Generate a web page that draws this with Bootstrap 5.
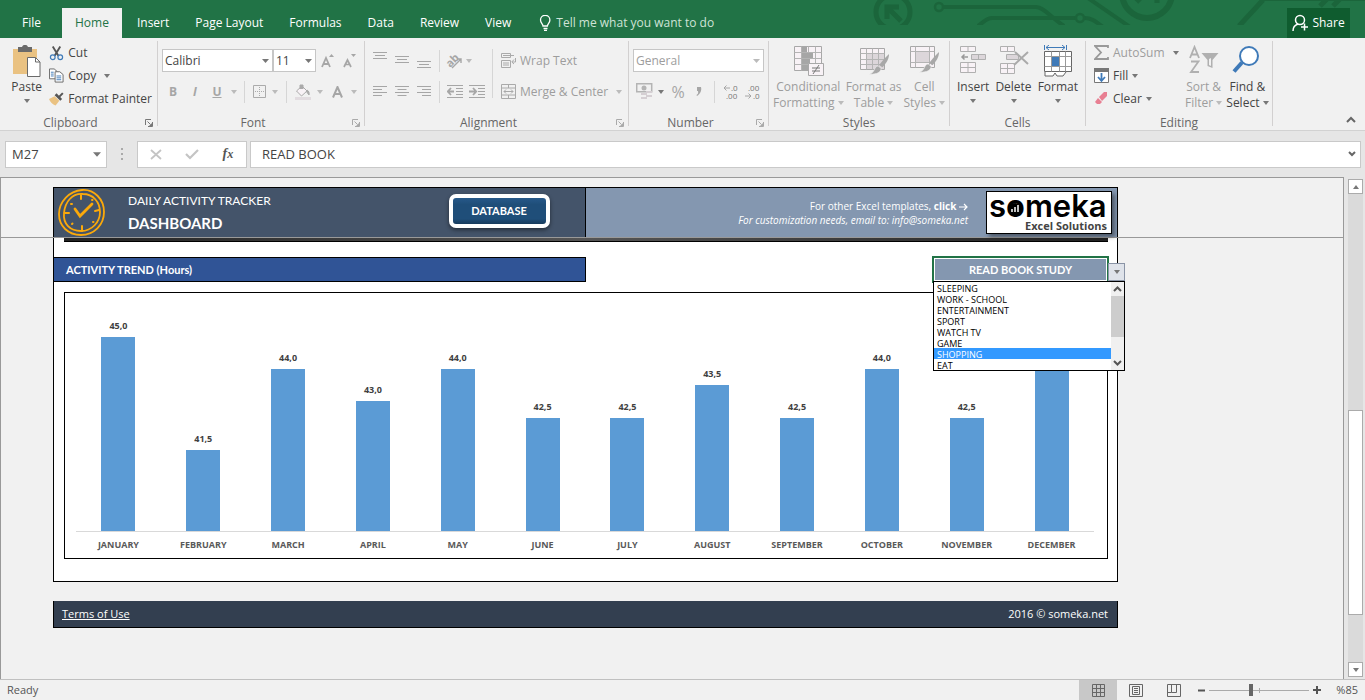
<!DOCTYPE html>
<html lang="en">
<head>
<meta charset="utf-8">
<meta name="viewport" content="width=device-width, initial-scale=1">
<title>Daily Activity Tracker - Excel</title>
<link href="https://cdn.jsdelivr.net/npm/bootstrap@5.3.0/dist/css/bootstrap.min.css" rel="stylesheet">
<style>
:root{--ui:"Open Sans","Noto Sans",sans-serif;--cell:Lato,"Open Sans",sans-serif;--green:#217346;--line:#d2d0d0}
body{font-family:var(--ui);font-size:12px;line-height:16px;color:#444;background:#f1f1f1;min-height:100vh;overflow:hidden}
svg{display:block;flex:none}
button,select,input{font:inherit;color:inherit}
/* title bar */
.topbar{background:var(--green);height:38px;position:relative;padding:0 15px 0 9px}
.topbar .art{position:absolute;right:0;top:0}
.tab{color:#fff;border:0;border-radius:0;padding:0 13px;height:30px;line-height:30px;font-size:12px;background:none}
.tab.active{background:#f1f1f1;color:var(--green);margin-right:2px}
.tell{color:#cfe3d7;padding-left:15px}
.share{background:#0f5c2f;color:#fff;width:63px;height:30px;border:0;position:relative}
/* ribbon */
.ribbon{background:#f1f1f1;height:93px;border-bottom:1px solid #d2d2d2}
.rgroup{position:relative;border-right:1px solid var(--line);margin:3px 0 5px;height:85px;flex:none}
.rgroup .body{height:73px}
.rgroup .rows{padding-top:8px}
.rgroup .title{height:12px;line-height:18px;color:#666;text-align:center}
.g-clip{width:158px}.g-font{width:207px}.g-align{width:264px}.g-num{width:140px}.g-style{width:181px}.g-cells{width:136px}.g-edit{width:187px}
.editcol{width:87px}
.launch{position:absolute;right:4px;bottom:-1px;color:#777}
.launch.off{color:#aaa}
.tb{border:0;background:none;padding:0;height:23px;display:flex;align-items:center;justify-content:center;white-space:nowrap;flex:none}
.w16{width:16px}.w20{width:20px}.w22{width:22px}
.tc{width:12px}
.off{color:#9d9d9d}
.glyph{color:#a6a6a6;font-weight:700}
.big{border:0;background:none;padding:4px 0 0;display:flex;flex-direction:column;align-items:center;white-space:nowrap;flex:none}
.big svg.ic{height:34px}
.caret{display:inline-block;border:3px solid transparent;border-top:4px solid #777;border-bottom:0;vertical-align:2px;flex:none}
.caret.up{transform:rotate(180deg)}
.off .caret,.caret.off{border-top-color:#bbb}
.off .caret.dark{border-top-color:#777}
.vsep{width:1px;background:#d6d6d6;height:22px;flex:none;margin:0 5px}
.rsel{border:1px solid #c6c6c6;border-radius:0;height:23px;flex:none;padding:0 14px 0 2px;font-size:12px;line-height:16px;color:#444;background-color:#fff;background-position:right 3px center;background-size:7px 4px;
 background-image:url("data:image/svg+xml,%3Csvg xmlns='http://www.w3.org/2000/svg' viewBox='0 0 7 4'%3E%3Cpath d='M0 0h7L3.5 4z' fill='%23777'/%3E%3C/svg%3E")}
.rsel:disabled{color:#9d9d9d;background-color:#fff;opacity:1;
 background-image:url("data:image/svg+xml,%3Csvg xmlns='http://www.w3.org/2000/svg' viewBox='0 0 7 4'%3E%3Cpath d='M0 0h7L3.5 4z' fill='%23bbb'/%3E%3C/svg%3E")}
.wfont{width:111px}.wsize{width:43px}.wnum{width:131px}
/* formula bar */
.fbar{background:#e6e6e6;height:46px;padding:0 4px 0 5px}
.fbar .fld{height:27px;border:1px solid #c9c9c9;border-radius:0;background-color:#fff;font-size:13px;color:#444}
.namebox{width:102px;padding:0 14px 0 6px;background-size:8px 5px;background-position:right 5px center}
.grip{margin:0 14px}
.fbtns{width:110px;margin-right:3px}
.fx{font-family:"Liberation Serif",serif;font-style:italic;font-weight:700;font-size:14px;color:#555}
.finput{border:0;outline:0;background:none;padding:0 0 0 11px}
/* sheet */
.work{background:#e6e6e6}
.sheet{border:1px solid #999;border-bottom:0;background:#f1f1f1}
.vscroll{width:21px;background:#e6e6e6;padding:2px 2px 2px 4px}
.track{background:#dadada}
.sbtn{width:15px;height:15px;border:1px solid #ababab;background:#fff;padding:0}
.thumb{width:15px;height:205px;border:1px solid #ababab;background:#fff;margin-bottom:47px}
.frozen{border-bottom:1px solid #999;height:60px;padding-top:9px}
.area{margin-left:52px;margin-right:225px}
.banner{border:1px solid #000;border-bottom:0;height:50px;background:#8497b0}
.banner .half{background:#44546a;border-right:1px solid #000;width:50%;padding-right:35px;color:#fff;font-family:var(--cell)}
.dash1{font-size:12px;line-height:20px}.dash2{font-size:15px;line-height:24px;font-weight:700}
.heads{margin-left:22px}
.dbbtn{background:linear-gradient(#27598a,#1f4e79 25%,#1f4e79 80%,#173b5c);border:4px solid #fff;border-radius:7px;width:101px;height:34px;color:#fff;font-weight:700;font-size:11px;padding:0;box-shadow:0 2px 4px #0007;font-family:var(--cell)}
.note{color:#fff;font-size:10px;line-height:14px;text-align:right;white-space:nowrap;margin-right:18px}
.note svg{display:inline-block;vertical-align:-1px}
.logo{position:relative;background:#fff;border:1px solid #000;width:126px;height:43px;box-shadow:3px 3px 4px #0006;margin-right:5px}
.panel{background:#fff;border:1px solid #000;border-top:0;padding:0 9px 22px 10px}
.strip{height:4px;background:linear-gradient(90deg,#222,#555 50%,#222);border-bottom:1px solid #000}
.trendrow{margin:15px -1px 0 -10px}
.trend{background:#305496;border:1px solid #000;border-left:0;height:25px;color:#fff;font:700 11px/23px var(--cell);width:calc(50% + 4px);padding-left:12px}
.picked{border:2px solid var(--green);width:177px;height:27px;padding:1px;position:relative;margin-top:-1px}
.picked .val{background:#8497b0;color:#fff;font:700 11px/21px var(--cell);text-align:center;height:21px}
.ddbtn{position:absolute;left:174px;top:5px;width:17px;height:18px;border:1px solid #8a94a6;background:#dfe3ea;padding:0;display:flex;align-items:center;justify-content:center}
.ddlist{position:absolute;z-index:3;left:-1px;top:23px;width:192px;height:90px;border:1px solid #000;background:#fff}
.ddlist select{border:0;padding:0;margin:0;outline:0;overflow:hidden;width:177px;height:88px;background:#fff;color:#000;font-size:9px;appearance:none;scrollbar-width:none}
.ddlist option{height:11px;min-height:0;line-height:9px;padding:0 0 2px 3px;font-size:9px}
.ddlist option.hot{background:#3399ff;color:#fff}
.ddlist .bar2{width:13px;background:#f0f0f0}
.ddlist .th{height:41px;background:#cdcdcd}
.chart{border:1px solid #000;height:267px;margin-top:9px;padding:0 13px 0 11px}
.plot{height:239px;border-bottom:1px solid #d9d9d9}
.colm{flex:1 1 0;display:flex;flex-direction:column;align-items:center;justify-content:flex-end}
.colm b{font-size:9px;line-height:12px;color:#404040;margin-bottom:5px}
.colm i{display:block;width:34px;background:#5b9bd5}
.months span{flex:1 1 0;text-align:center;font-weight:700;font-size:9px;line-height:12px;color:#595959;padding-top:7px}
.foot{background:#333f50;border:1px solid #000;border-top:0;height:27px;margin-top:19px;color:#fff;font-size:11px;padding:0 9px 0 8px}
.foot a{color:#fff}
/* status bar */
.status{background:#f1f1f1;border-top:1px solid #c0c0c0;height:21px;padding:0 7px;color:#555;font-size:11px}
.vbtn{width:38px;height:20px;border:0;background:none;display:flex;align-items:center;justify-content:center;padding:0}
.vbtn.on{background:#c8c8c8}
.zoomval{width:33px}
.zoomer{appearance:none;width:100px;height:14px;background:linear-gradient(#aaa,#aaa) 0 7px/100% 1px no-repeat,linear-gradient(#aaa,#aaa) 50px 5px/1px 5px no-repeat;margin:0}
.zoomer::-webkit-slider-thumb{appearance:none;width:4px;height:12px;background:#666}
</style>
</head>
<body class="d-flex flex-column">
<svg width="0" height="0" class="position-absolute" aria-hidden="true">
 <defs>
  <symbol id="launch" viewBox="0 0 8 8"><path d="M.5 6V.5H6M2.500 2.500l3 3M7.500 3v4.500H3" fill="none" stroke="currentColor"/><path d="M7 4v3H4z" fill="currentColor"/></symbol>
  <symbol id="brush" viewBox="0 0 20 20"><path d="M20 0c0 5-3 9-6 12l-3-2c3-4 6-7 9-10z" fill="#a8a8a8"/><path d="M10.500 11l2.500 2.500c-1 3-3 5-11 5 3-1 4-2.500 5-5 1-2 2-2.500 3.500-2.500z" fill="#a8a8a8" stroke="#f1f1f1" stroke-width=".6"/></symbol>
 </defs>
</svg>

<header class="topbar d-flex align-items-end">
 <svg class="art" width="495" height="38" viewBox="870 0 495 38" fill="none" stroke="#1b653b">
  <clipPath id="c1"><rect x="870" y="0" width="495" height="25"/></clipPath>
  <g clip-path="url(#c1)"><circle cx="893" cy="12" r="17" stroke-width="5"/><path d="M887 19V7h12M888 8l13 13" stroke-width="5"/>
  <circle cx="939" cy="7" r="4" stroke-width="2.500"/><path d="M944 7h92c8 0 14 10 28 19M978 26c6-4 8-8 14-8h83M1085 18c7 0 11 4 18 9M1088-2l42 29" stroke-width="4"/><circle cx="1080" cy="18" r="4" stroke-width="2.500"/>
  <circle cx="1147" cy="-7" r="25" stroke-width="6"/><path d="M1134-4l6 6M1157-2v5M1239 26l24-26M1320 6l8-8M1333 6l8-8" stroke-width="5"/><path d="M1262 0h103" stroke-width="2"/></g>
 </svg>
 <nav class="d-flex position-relative" aria-label="Ribbon tabs">
  <button class="tab me-2">File</button><button class="tab active">Home</button><button class="tab">Insert</button><button class="tab">Page Layout</button><button class="tab">Formulas</button><button class="tab">Data</button><button class="tab">Review</button><button class="tab">View</button>
  <button class="tab tell d-flex align-items-center gap-1"><svg width="13" height="16" viewBox="0 0 13 16" fill="none" stroke="#fff" stroke-width="1.300"><path d="M4 11c0-2-2.500-3-2.500-6a4.700 4.700 0 0 1 9.400 0c0 3-2.500 4-2.500 6zM4.500 13.500h4M5 15.300h3"/></svg>Tell me what you want to do</button>
 </nav>
 <button class="share ms-auto d-flex align-items-center justify-content-center gap-1 p-0"><svg width="16" height="18" viewBox="0 0 16 18" fill="none" stroke="#fff" stroke-width="1.500"><circle cx="8" cy="6" r="4.500"/><path d="M1 17c0-4 2-6 5-7M9 13h7M12.500 9.500v7"/></svg>Share</button>
</header>

<section class="ribbon d-flex position-relative" aria-label="Ribbon">
 <div class="rgroup g-clip">
  <div class="body d-flex ps-2">
   <button class="big w-25"><svg class="ic" width="30" height="34" viewBox="0 0 30 34"><path d="M1 4h24v25H1z" fill="#eac282"/><path d="M6 2h4c1-3 5-3 6 0h4v5H6z" fill="#6a6a6a"/><path d="M15.500 12.500h8l4.500 4.500v14.500H15.500z" fill="#fff" stroke="#6a6a6a"/><path d="M23.500 12.500V17h4.500" fill="none" stroke="#6a6a6a"/></svg><span>Paste</span><span class="caret mt-1"></span></button>
   <div class="ps-1">
    <button class="tb gap-1"><svg width="15" height="16" viewBox="0 0 16 16" fill="none"><path d="M4 1l6 10M12 1L6 11" stroke="#555" stroke-width="2"/><circle cx="4" cy="12.500" r="2.500" stroke="#3f7ab8" stroke-width="1.300"/><circle cx="12" cy="12.500" r="2.500" stroke="#3f7ab8" stroke-width="1.300"/></svg>Cut</button>
    <button class="tb gap-1"><svg width="15" height="15" viewBox="0 0 16 15" fill="#fff" stroke="#666"><path d="M.5.500h5L8.500 3v8H.5z"/><path d="M6.500 3.500h5l3.500 3v8H6.500z"/><path d="M2 4h3M2 6h3M2 8h3M8 8h5M8 10h5M8 12h5" stroke="#3f7ab8"/></svg>Copy<span class="caret ms-1"></span></button>
    <button class="tb gap-1"><svg width="15" height="15" viewBox="0 0 16 15"><path d="M0 8l6-3 5 5-4 5c-3-1-6-4-7-7z" fill="#eac282"/><path d="M6 4l2-2 6 6-2 2z" fill="#555"/><path d="M10 5l4-4 1.500 1.500-4 4z" fill="#555"/></svg>Format Painter</button>
   </div>
  </div>
  <div class="title pe-3">Clipboard</div><svg class="launch" width="8" height="8"><use href="#launch"/></svg>
 </div>

 <div class="rgroup g-font">
  <div class="body rows px-1 d-flex flex-column gap-2">
   <div class="d-flex align-items-center"><select class="form-select rsel wfont" aria-label="Font"><option>Calibri</option></select><select class="form-select rsel wsize" aria-label="Font size"><option>11</option></select>
    <button class="tb w22 glyph" aria-label="Increase font size"><svg width="13" height="15" viewBox="0 0 13 15"><path d="M1 14L5 5l4 9M2.500 11h5" fill="none" stroke="#a6a6a6" stroke-width="1.800"/><path d="M8 4l2.500-3L13 4z" fill="#a6a6a6"/></svg></button>
    <button class="tb w22 glyph" aria-label="Decrease font size"><svg width="13" height="15" viewBox="0 0 13 15"><path d="M1 14l3.500-7L8 14M2.500 11.500h4" fill="none" stroke="#a6a6a6" stroke-width="1.700"/><path d="M8 1l2.500 3L13 1z" fill="#a6a6a6"/></svg></button></div>
   <div class="d-flex align-items-center glyph"><button class="tb w22">B</button><button class="tb w22 fst-italic">I</button><button class="tb w22 text-decoration-underline">U</button><button class="tb tc" aria-label="Underline options"><span class="caret off"></span></button><span class="vsep mx-1"></span>
    <button class="tb w20" aria-label="Borders"><svg width="13" height="13" viewBox="0 0 13 13" fill="none" stroke="#ababab"><path d="M.5.500h12v12H.5z"/><path d="M6.500 2v10M2 6.500h10" stroke-dasharray="1 1"/></svg></button><button class="tb tc" aria-label="Border options"><span class="caret off"></span></button><span class="vsep"></span>
    <button class="tb w22" aria-label="Fill color"><svg width="16" height="16" viewBox="0 0 16 16"><path d="M1.500 7L7 2l5 5-5.500 5z" fill="#f8f2f6" stroke="#aaa"/><path d="M5 5V1h3v4M12 6c2 1 2.500 3 2 5l-3-4z" fill="#aaa" stroke="#aaa"/><path d="M0 13h16v3H0z" fill="#e2dce0"/></svg></button><button class="tb tc" aria-label="Fill options"><span class="caret off"></span></button>
    <button class="tb w22" aria-label="Font color"><svg width="11" height="12" viewBox="0 0 11 12"><path d="M1 11.500L5.500 1 10 11.500M3 8h5" fill="none" stroke="#a6a6a6" stroke-width="2"/></svg></button><button class="tb tc" aria-label="Font color options"><span class="caret off"></span></button></div>
  </div>
  <div class="title pe-3">Font</div><svg class="launch off" width="8" height="8"><use href="#launch"/></svg>
 </div>

 <div class="rgroup g-align">
  <div class="body rows ps-1 d-flex">
   <div class="d-flex flex-column gap-2">
    <div class="d-flex align-items-center">
     <button class="tb w22" aria-label="Top align"><svg width="14" height="17" viewBox="0 0 14 17" stroke="#a6a6a6"><path d="M0 .5h14M2 3.500h10M0 6.500h14"/></svg></button><button class="tb w22" aria-label="Middle align"><svg width="14" height="13" viewBox="0 0 14 13" stroke="#a6a6a6"><path d="M0 2.500h14M2 5.500h10M0 8.500h14"/></svg></button><button class="tb w22" aria-label="Bottom align"><svg width="14" height="15" viewBox="0 0 14 15" stroke="#a6a6a6"><path d="M0 8.500h14M2 11.500h10M0 14.500h14"/></svg></button><span class="vsep mx-1"></span>
     <button class="tb w22" aria-label="Orientation"><svg width="22" height="22" viewBox="0 0 22 22"><text x="2" y="14" transform="rotate(-45 9 11)" font-size="11" font-weight="700" fill="#a6a6a6">ab</text><path d="M8 18l9-9M13 9h4v4" stroke="#a6a6a6" stroke-width="1.400" fill="none"/></svg></button><button class="tb" aria-label="Orientation options"><span class="caret off"></span></button>
    </div>
    <div class="d-flex align-items-center">
     <button class="tb w22" aria-label="Align left"><svg width="14" height="11" viewBox="0 0 14 11" stroke="#a6a6a6"><path d="M0 .5h14M0 3.500h9M0 6.500h14M0 9.500h9"/></svg></button><button class="tb w22" aria-label="Center"><svg width="14" height="11" viewBox="0 0 14 11" stroke="#a6a6a6"><path d="M0 .5h14M2.500 3.500h9M0 6.500h14M2.500 9.500h9"/></svg></button><button class="tb w22" aria-label="Align right"><svg width="14" height="11" viewBox="0 0 14 11" stroke="#a6a6a6"><path d="M0 .5h14M5 3.500h9M0 6.500h14M5 9.500h9"/></svg></button><span class="vsep mx-1"></span>
     <button class="tb w22" aria-label="Decrease indent"><svg width="16" height="13" viewBox="0 0 16 13" stroke="#a6a6a6"><path d="M0 .5h16M9 3.500h7M9 6.500h7M9 9.500h7M0 12.500h16"/><path d="M7 6.500H1M4 3L.8 6.500 4 10" stroke-width="1.800" fill="none"/></svg></button><button class="tb w22" aria-label="Increase indent"><svg width="16" height="13" viewBox="0 0 16 13" stroke="#a6a6a6"><path d="M0 .5h16M9 3.500h7M9 6.500h7M9 9.500h7M0 12.500h16"/><path d="M0 6.500h6M4 3l3.200 3.500L4 10" stroke-width="1.800" fill="none"/></svg></button>
    </div>
   </div>
   <span class="vsep h-75 ms-1 me-2"></span>
   <div class="d-flex flex-column gap-2 off">
    <button class="tb gap-1 justify-content-start"><svg width="15" height="16" viewBox="0 0 15 16" fill="none" stroke="#aaa"><path d="M.5.500h9v4h-9zM.5 7.500h9v7h-9zM2 10h6M2 12h6M2 2.500h11M14.500 5v4H11M13 6.500L10.800 9l2.200 2"/></svg>Wrap Text</button>
    <button class="tb gap-1"><svg width="15" height="15" viewBox="0 0 15 15" fill="none" stroke="#aaa"><path d="M.5.500h14v14H.5zM.5 4h14M.5 11h14M7.500.500V4M7.500 11v3.500M3 7.500h9M5 5.500l-2 2 2 2M10 5.500l2 2-2 2"/></svg>Merge &amp; Center<span class="caret ms-1"></span></button>
   </div>
  </div>
  <div class="title pe-3">Alignment</div><svg class="launch off" width="8" height="8"><use href="#launch"/></svg>
 </div>

 <div class="rgroup g-num">
  <div class="body rows px-1 d-flex flex-column gap-2">
   <select class="form-select rsel wnum" disabled aria-label="Number format"><option>General</option></select>
   <div class="d-flex align-items-center glyph"><button class="tb w22" aria-label="Accounting format"><svg width="17" height="17" viewBox="0 0 17 17"><path d="M.7.700h15v8H.7z" fill="none" stroke="#b4b4b4" stroke-width="1.500"/><circle cx="8" cy="5" r="2.500" fill="#b4b4b4"/><path d="M10 8h6v2h-6zM5 10h6v2H5zM10 12h6v2h-6zM5 14h6v2H5z" fill="#d5cfd3"/></svg></button><button class="tb tc" aria-label="Currencies"><span class="caret"></span></button>
    <button class="tb w22 fs-6 fw-normal">%</button><button class="tb w20" aria-label="Comma style"><svg width="6" height="9" viewBox="0 0 6 9"><path d="M1 0h4c1 4-1 7-4 9l-.5-1C2 7 2.500 6 2 4H1z" fill="#a6a6a6"/></svg></button><span class="vsep"></span>
    <button class="tb w22" aria-label="Increase decimal"><svg width="18" height="22" viewBox="0 0 18 22"><text x="9" y="10" font-size="8" font-weight="400" fill="#777">.0</text><text x="4" y="18" font-size="8" font-weight="400" fill="#777">.00</text><path d="M8 7H2M4.500 4.500L2 7l2.500 2.500" fill="none" stroke="#a6a6a6"/></svg></button><button class="tb w22" aria-label="Decrease decimal"><svg width="18" height="22" viewBox="0 0 18 22"><text x="4" y="10" font-size="8" font-weight="400" fill="#777">.00</text><text x="9" y="18" font-size="8" font-weight="400" fill="#777">.0</text><path d="M1 15h6M4.500 12.500L7 15l-2.500 2.500" fill="none" stroke="#a6a6a6"/></svg></button></div>
  </div>
  <div class="title pe-3">Number</div><svg class="launch off" width="8" height="8"><use href="#launch"/></svg>
 </div>

 <div class="rgroup g-style">
  <div class="body d-flex justify-content-between px-1 off">
   <button class="big"><svg class="ic" width="32" height="34" viewBox="0 0 32 34"><path d="M2.500 1.500h27v24h-27z" fill="#f8f2f6" stroke="#a8a8a8"/><path d="M2.500 7.500h27M2.500 13.500h27M2.500 19.500h27M9.500 1.500v24M16.500 1.500v24M23.500 1.500v24" stroke="#b4b4b4"/><path d="M10 2h5v5h-5zM10 8h11v5H10zM10 14h8v5h-8zM10 20h6v5h-6z" fill="#a6a6a6"/><path d="M16.500 18.500h15v12h-15z" fill="#f8f2f6" stroke="#a8a8a8"/><path d="M20 23h8M20 26h8M27 20l-6 9" stroke="#777"/></svg><span>Conditional</span><span>Formatting <span class="caret"></span></span></button>
   <button class="big"><svg class="ic" width="32" height="34" viewBox="0 0 32 34"><path d="M2.500 3.500h24v21h-24z" fill="#f8f2f6" stroke="#a8a8a8"/><path d="M9 9h17v15H9z" fill="#dcd6da"/><path d="M2.500 8.500h24M2.500 14.500h24M2.500 19.500h24M8.500 3.500v21M14.500 3.500v21M20.500 3.500v21" stroke="#b4b4b4"/><use href="#brush" x="9" y="9" width="22" height="22"/></svg><span>Format as</span><span>Table <span class="caret"></span></span></button>
   <button class="big"><svg class="ic" width="32" height="34" viewBox="0 0 32 34"><path d="M2.500 1.500h24v21h-24z" fill="#f8f2f6" stroke="#a8a8a8"/><path d="M2.500 6.500h24M2.500 17.500h24M7.500 1.500v21M21.500 1.500v21" stroke="#b4b4b4"/><path d="M8 7h13v10H8z" fill="#dcd6da"/><use href="#brush" x="9" y="7" width="22" height="22"/></svg><span>Cell</span><span>Styles <span class="caret"></span></span></button>
  </div>
  <div class="title">Styles</div>
 </div>

 <div class="rgroup g-cells">
  <div class="body d-flex justify-content-between px-1">
   <button class="big flex-fill"><svg class="ic" width="28" height="34" viewBox="0 0 28 34" fill="#f8f2f6" stroke="#b0b0b0"><path d="M1.500 1.500h15v5h-15zM9 1.500v5M1.500 17.500h15v10h-15zM9 17.500v10M1.500 22.500h15"/><path d="M12.500 9.500h14v5h-14zM19.500 9.500v5" fill="#dcd6da"/><path d="M9 12H3M5.500 9.500L3 12l2.500 2.500" stroke="#999" stroke-width="1.500" fill="none"/></svg><span>Insert</span><span class="caret mt-1"></span></button>
   <button class="big flex-fill"><svg class="ic" width="30" height="34" viewBox="0 0 30 34" fill="#f8f2f6" stroke="#b0b0b0"><path d="M1.500 1.500h14v5h-14zM8.500 1.500v5M1.500 18.500h14v10h-14zM8.500 18.500v10M1.500 23.500h14"/><path d="M7.500 9.500h12v5h-12z" fill="#dcd6da"/><path d="M16 7l13 12M29 7L15 20" stroke="#aaa" stroke-width="2"/></svg><span>Delete</span><span class="caret mt-1"></span></button>
   <button class="big flex-fill"><svg class="ic" width="30" height="34" viewBox="0 0 30 34"><path d="M1.500 0v5M23.500 0v5M3 2.500h19M6 0L3 2.500 6 5M19 0l3 2.500L19 5" stroke="#3f7ab8" fill="none"/><path d="M1.500 6.500h27v20h-27z" fill="#fff" stroke="#666"/><path d="M1.500 11.500h27M1.500 21.500h27M8.500 6.500v20M16.500 6.500v20M22.500 6.500v20" stroke="#999"/><path d="M9 12h7v9H9z" fill="#3f7ab8"/><path d="M2 27v4h8l2-3 2 3h6l3-4" fill="#fff" stroke="#666"/></svg><span>Format</span><span class="caret mt-1"></span></button>
  </div>
  <div class="title">Cells</div>
 </div>

 <div class="rgroup g-edit">
  <div class="body d-flex ps-2">
   <div class="editcol">
    <button class="tb gap-1 off"><svg width="15" height="15" viewBox="0 0 15 15"><path d="M14 3V1H1l6 6.500L1 14h13v-2" fill="none" stroke="#999" stroke-width="1.800"/></svg>AutoSum<span class="caret dark ms-1"></span></button>
    <button class="tb gap-1"><svg width="15" height="15" viewBox="0 0 15 15"><path d="M.5.500h14v14H.5z" fill="#fff" stroke="#777"/><path d="M0 0h15v4H0z" fill="#777"/><path d="M7.500 5v8M4 9l3.500 4L11 9" fill="none" stroke="#3f7ab8" stroke-width="1.800"/></svg>Fill<span class="caret"></span></button>
    <button class="tb gap-1"><svg width="15" height="15" viewBox="0 0 15 15"><path d="M5 6l5-5h3v4L8 10z" fill="#e87f92"/><path d="M4 7l4 4-2 2H3L1 11z" fill="#e87f92"/></svg>Clear<span class="caret"></span></button>
   </div>
   <button class="big off px-1"><svg class="ic" width="30" height="34" viewBox="0 0 30 34" fill="none" stroke="#b0b0b0" stroke-width="1.800"><path d="M1 13L5.500 2 10 13M2.500 9.500h6M2 16.500h7.500L2 27h8"/><path d="M12.500 8h17l-6 7v8l-5-2v-6z" fill="#b0b0b0" stroke="none"/><path d="M20 14v6l2 1v-8z" fill="#f1f1f1" stroke="none"/></svg><span>Sort &amp;</span><span>Filter <span class="caret"></span></span></button>
   <button class="big"><svg class="ic" width="30" height="34" viewBox="0 0 30 34"><circle cx="17" cy="11" r="9" fill="#fff" stroke="#3f7ab8" stroke-width="2"/><path d="M10 17.500l-8 9" stroke="#3f7ab8" stroke-width="4"/></svg><span>Find &amp;</span><span>Select <span class="caret"></span></span></button>
  </div>
  <div class="title">Editing</div>
 </div>
 <button class="tb w20 ms-auto align-self-end me-1" aria-label="Collapse ribbon"><svg width="10" height="3" viewBox="0 4 10 3" overflow="visible"><path d="M1 9l4-4 4 4" fill="none" stroke="#666" stroke-width="2"/></svg></button>
</section>

<section class="fbar d-flex align-items-center" aria-label="Formula bar">
 <select class="form-select rsel fld namebox" aria-label="Name box"><option>M27</option></select>
 <svg class="grip" width="2" height="12" viewBox="0 0 2 12" fill="#aaa"><path d="M0 0h2v2H0zM0 5h2v2H0zM0 10h2v2H0z"/></svg>
 <div class="fld fbtns d-flex align-items-center justify-content-around">
  <button class="tb w22" aria-label="Cancel"><svg width="12" height="11" viewBox="0 0 12 11"><path d="M1 1l10 9M11 1L1 10" stroke="#c4c4c4" stroke-width="1.800"/></svg></button>
  <button class="tb w22" aria-label="Enter"><svg width="14" height="11" viewBox="0 0 14 11"><path d="M1 5l4 4 8-8" fill="none" stroke="#c4c4c4" stroke-width="2.200"/></svg></button>
  <button class="tb w22 fx">f<small>x</small></button>
 </div>
 <div class="fld flex-fill d-flex align-items-center"><input class="finput flex-fill" value="READ BOOK" aria-label="Formula"><svg class="me-1" width="8" height="6" viewBox="0 0 8 6"><path d="M1 1l3 3 3-3" fill="none" stroke="#666" stroke-width="2"/></svg></div>
</section>

<main class="work d-flex flex-fill">
 <div class="sheet flex-fill">
  <div class="frozen"><div class="area banner d-flex">
   <div class="half d-flex align-items-center">
    <svg class="ms-1" width="48" height="48" viewBox="0 0 48 48" fill="none" stroke="#fba90a" stroke-width="1.800" stroke-linecap="round"><path d="M24 1C36 0 46 10 46 23S36 46 23 46 1 37 1 25 11 2 24 1z"/><path d="M25 5c10 0 17 8 17 18S34 42 23 42 5 35 6 24 14 4 25 5z"/><path d="M17 20l5 7 12-12" stroke-width="2.800"/><path d="M23 6v4M24 37v5M7 24h4M37 22l4-1M13 15l1 0M34 11l.5 0M14 35l.5-.5M35 33l.5 0" stroke-width="2"/></svg>
    <div class="heads"><div class="dash1">DAILY ACTIVITY TRACKER</div><div class="dash2">DASHBOARD</div></div>
    <button class="dbbtn ms-auto mb-1">DATABASE</button>
   </div>
   <div class="flex-fill d-flex align-items-center justify-content-end">
    <div class="note">For other Excel templates, <b>click</b> <svg width="9" height="8" viewBox="0 0 9 8" fill="none" stroke="#fff" stroke-width="1.200" role="img" aria-label="right arrow"><path d="M0 4h8M5 1l3 3-3 3"/></svg><br><i>For customization needs, email to: info@someka.net</i></div>
    <div class="logo"><svg width="124" height="41" viewBox="0 0 124 41"><text x="2" y="25" font-family="Inter" font-weight="600" font-size="31" fill="#000">someka</text><circle cx="28" cy="17" r="6" fill="#000"/><path d="M25 20v-3M28 20v-5M31 20v-7" stroke="#fff" stroke-width="1.500"/><text x="38" y="38" font-family="Open Sans" font-weight="700" font-size="11" fill="#444">Excel Solutions</text></svg></div>
   </div>
  </div></div>
  <div class="area">
   <section class="panel">
    <div class="strip"></div>
    <div class="trendrow d-flex justify-content-between">
     <div class="trend">ACTIVITY TREND (Hours)</div>
     <div class="picked"><div class="val">READ BOOK STUDY</div><button class="ddbtn" aria-label="Open list"><span class="caret"></span></button>
      <div class="ddlist d-flex"><select size="8" aria-label="Activity"><option>SLEEPING</option><option>WORK - SCHOOL</option><option>ENTERTAINMENT</option><option>SPORT</option><option>WATCH TV</option><option>GAME</option><option class="hot">SHOPPING</option><option>EAT</option></select>
       <div class="bar2 d-flex flex-column align-items-center"><svg width="9" height="14" viewBox="0 0 9 14"><path d="M1 9l3.500-3.500L8 9" fill="none" stroke="#555" stroke-width="2"/></svg><div class="th w-100"></div><svg class="mt-auto" width="9" height="14" viewBox="0 0 9 14"><path d="M1 5l3.500 3.500L8 5" fill="none" stroke="#555" stroke-width="2"/></svg></div></div>
     </div>
    </div>
    <div class="chart"><div class="plot d-flex" id="plot"></div><div class="months d-flex" id="months"></div></div>
   </section>
   <footer class="foot d-flex align-items-center justify-content-between"><a href="#">Terms of Use</a><span>2016 © someka.net</span></footer>
  </div>
 </div>
 <div class="vscroll d-flex flex-column"><div class="track flex-fill d-flex flex-column"><button class="sbtn d-flex align-items-center justify-content-center" aria-label="Scroll up"><span class="caret up"></span></button><div class="thumb mt-auto"></div><button class="sbtn d-flex align-items-center justify-content-center" aria-label="Scroll down"><span class="caret"></span></button></div></div>
</main>

<footer class="status d-flex align-items-center"><span>Ready</span>
 <div class="ms-auto d-flex align-items-center">
  <button class="vbtn on" aria-label="Normal view"><svg width="13" height="13" viewBox="0 0 13 13" fill="none" stroke="#666"><path d="M.5.500h12v12H.5zM.5 4.500h12M.5 8.500h12M4.500.500v12M8.500.500v12"/></svg></button>
  <button class="vbtn" aria-label="Page layout view"><svg width="14" height="13" viewBox="0 0 14 13" fill="none" stroke="#666"><path d="M.5.500h13v12H.5zM3.500 2.500h7v8h-7zM5 4.500h4M5 6.500h4M5 8.500h4"/></svg></button>
  <button class="vbtn" aria-label="Page break view"><svg width="14" height="13" viewBox="0 0 14 13" fill="none" stroke="#666"><path d="M.5.500h13v12H.5zM4.500.500v8h5v-8M.5 8.500h4"/></svg></button>
  <button class="tb w16" aria-label="Zoom out"><svg width="7" height="7" viewBox="0 0 7 7"><path d="M0 3.500h7" stroke="#555" stroke-width="2"/></svg></button>
  <input class="zoomer" type="range" min="10" max="190" value="85" aria-label="Zoom">
  <button class="tb w16" aria-label="Zoom in"><svg width="8" height="8" viewBox="0 0 8 8"><path d="M0 4h8M4 0v8" stroke="#555" stroke-width="2"/></svg></button>
  <span class="zoomval text-end">%85</span>
 </div>
</footer>
<script src="https://cdn.jsdelivr.net/npm/bootstrap@5.3.0/dist/js/bootstrap.bundle.min.js"></script>
<script>
const hours=[['JANUARY',45],['FEBRUARY',41.5],['MARCH',44],['APRIL',43],['MAY',44],['JUNE',42.5],['JULY',42.5],['AUGUST',43.5],['SEPTEMBER',42.5],['OCTOBER',44],['NOVEMBER',42.5],['DECEMBER',44]];
for(const [m,v] of hours){
 const h=Math.round((v-39)*32.4);
 plot.insertAdjacentHTML('beforeend',`<div class="colm"><b>${v.toFixed(1).replace('.',',')}</b><i style="height:${h}px"></i></div>`);
 months.insertAdjacentHTML('beforeend',`<span>${m}</span>`);
}
</script>
</body>
</html>
